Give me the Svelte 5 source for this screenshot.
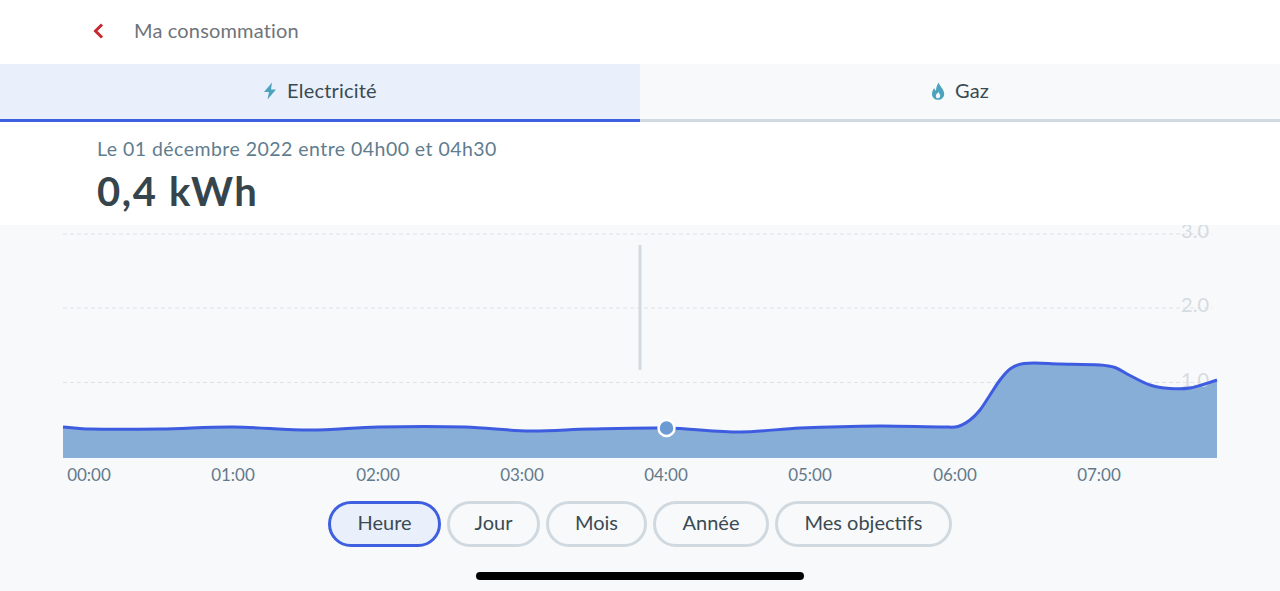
<script>
  const W = 1280, H = 265, top = 225;
  const pts = [[63,427],[90,429],[160,429],[233,427],[310,430],[378,427],[465,427],[530,431],[590,429],[666,428],[740,432],[800,428],[880,426],[945,427],[958,426.5],[970,420],[980,410],[990,395],[1000,380],[1010,369],[1024,363.5],[1060,364],[1100,365],[1115,367.5],[1130,375.5],[1150,385],[1170,388.5],[1190,388],[1217,380]];
  function slope(i) {
    const a = pts[Math.max(i-1,0)], c = pts[Math.min(i+1,pts.length-1)];
    return (c[1]-a[1])/(c[0]-a[0]);
  }
  function smooth(p) {
    let d = `M${p[0][0]} ${p[0][1]-top}`;
    for (let i = 0; i < p.length - 1; i++) {
      const b = p[i], c = p[i+1], dx = (c[0]-b[0])/3;
      const c1y = b[1] + slope(i)*dx, c2y = c[1] - slope(i+1)*dx;
      d += ` C${(b[0]+dx).toFixed(1)} ${(c1y-top).toFixed(1)} ${(c[0]-dx).toFixed(1)} ${(c2y-top).toFixed(1)} ${c[0]} ${c[1]-top}`;
    }
    return d;
  }
  const line = smooth(pts);
  const area = `${line} L1217 233 L63 233 Z`;
  const grid = [{y:9,l:'3.0'},{y:83,l:'2.0'},{y:157.5,l:'1.0'}];
  const ticks = [[89,'00:00'],[233,'01:00'],[378,'02:00'],[522,'03:00'],[666,'04:00'],[810,'05:00'],[955,'06:00'],[1099,'07:00']];
  const ranges = ['Heure','Jour','Mois','Année','Mes objectifs'];
</script>

<div class="page">
  <header class="top">
    <svg class="back" width="12" height="18" viewBox="0 0 12 18"><path d="M10 2.5 L3.5 9 L10 15.5" fill="none" stroke="#c8282e" stroke-width="3" stroke-linejoin="miter"/></svg>
    <span class="title">Ma consommation</span>
  </header>

  <nav class="tabs">
    <div class="tab on">
      <svg width="14" height="18" viewBox="0 0 14 18"><path d="M9 0.5 L1 10 H6 L4.5 17.5 L13 7.5 H8 Z" fill="#4da3bd"/></svg>
      <span>Electricité</span>
    </div>
    <div class="tab">
      <svg width="14" height="18" viewBox="0 0 14 18"><path fill-rule="evenodd" d="M7.8 0.5 C8.2 4 13.2 7 13.2 12 C13.2 15.5 10.3 17.8 7 17.8 C3.7 17.8 1 15.5 1 12 C1 9.5 2 7.5 3.3 6 C3.6 7.5 4.2 8.3 5 8.8 C5 6 5.8 3 7.8 0.5 Z M7 16.2 C8.3 16.2 9.2 15.2 9.2 13.8 C9.2 12.3 8 11.4 7.3 10 C6.6 11.4 4.9 12.3 4.9 13.9 C4.9 15.3 5.7 16.2 7 16.2 Z" fill="#4da3bd"/></svg>
      <span>Gaz</span>
    </div>
  </nav>

  <section class="info">
    <div class="when">Le 01 décembre 2022 entre 04h00 et 04h30</div>
    <div class="value">0,4 kWh</div>
  </section>

  <main class="panel">
    <svg class="chart" width={W} height={H} viewBox="0 0 {W} {H}">
      {#each grid as g}
        <line x1="63" x2="1212" y1={g.y} y2={g.y} class="gridline"/>
      {/each}
      <path d={area} fill="#87aed6"/>
      {#each grid as g}
        <text x="1209" y={g.y + 4} text-anchor="end" class="ylab">{g.l}</text>
      {/each}
      <path d={line} fill="none" stroke="#3d5ce0" stroke-width="3"/>
      <line x1="640" x2="640" y1="20" y2="145" stroke="#d3dadf" stroke-width="3"/>
      <circle cx="666.5" cy="203" r="8" fill="#6c9ad2" stroke="#fff" stroke-width="2.5"/>
      {#each ticks as t}
        <text x={t[0]} y="256" text-anchor="middle" class="xlab">{t[1]}</text>
      {/each}
    </svg>

    <div class="ranges">
      {#each ranges as r, i}
        <button class="pill" class:active={i === 0}>{r}</button>
      {/each}
    </div>

    <div class="home"></div>
  </main>
</div>

<style>
  :global(body) { margin: 0; background: #fff; }
  .page {
    width: 1280px; height: 591px; overflow: hidden;
    display: flex; flex-direction: column;
    font-family: "Lato", "Noto Sans", sans-serif;
    color: #36454c;
  }
  .top {
    height: 64px; box-sizing: border-box;
    display: flex; align-items: center; padding: 0 0 4px 92px; gap: 30px;
    background: #fff;
  }
  .back { display: block; margin-top: 2px; }
  .title { font-size: 20px; color: #6f7478; letter-spacing: 0.16px; }
  .tabs { display: flex; height: 58px; }
  .tab {
    flex: 1; box-sizing: border-box;
    display: flex; align-items: center; justify-content: center; gap: 10px;
    font-size: 20px; color: #3a4a52; letter-spacing: 0.2px;
    background: #f7f9fb; border-bottom: 3px solid #cfdae2;
  }
  .tab span { margin-top: -4px; }
  .tab svg { margin-top: -2px; }
  .tab.on { background: #e9f0fb; border-bottom-color: #3e5fe0; }
  .info {
    height: 103px; box-sizing: border-box;
    padding: 15px 0 0 97px; background: #fff;
  }
  .when { font-size: 19.5px; line-height: 24px; color: #5f7d8e; letter-spacing: 0.46px; }
  .value { font-size: 40px; font-weight: 700; line-height: 48px; margin-top: 6px; letter-spacing: 1.6px; color: #36454c; }
  .panel { flex: 1; background: #f7f9fb; display: flex; flex-direction: column; align-items: center; }
  .chart { display: block; flex: none; }
  .gridline { stroke: #dfe3e6; stroke-width: 1; stroke-dasharray: 4 3; }
  .ylab { font-size: 20px; fill: #d6dbdf; }
  .xlab { font-size: 17px; fill: #64798a; }
  .ranges { display: flex; gap: 6px; margin-top: 11px; }
  .pill {
    height: 46px; box-sizing: border-box; padding: 0 26px 4px;
    border: 3px solid #cfd9df; border-radius: 23px; background: #f7f9fb;
    font: inherit; font-size: 20px; color: #3a4a52;
  }
  .pill:nth-child(2) { padding: 0 25px 4px; }
  .pill:nth-child(3) { padding: 0 25.5px 4px; }
  .pill:nth-child(4) { padding: 0 27px 4px; }
  .pill.active { border-color: #3e5fe0; background: #e9f0fb; }
  .home { width: 328px; height: 8px; border-radius: 4px; background: #000; margin-top: 25px; }
</style>
